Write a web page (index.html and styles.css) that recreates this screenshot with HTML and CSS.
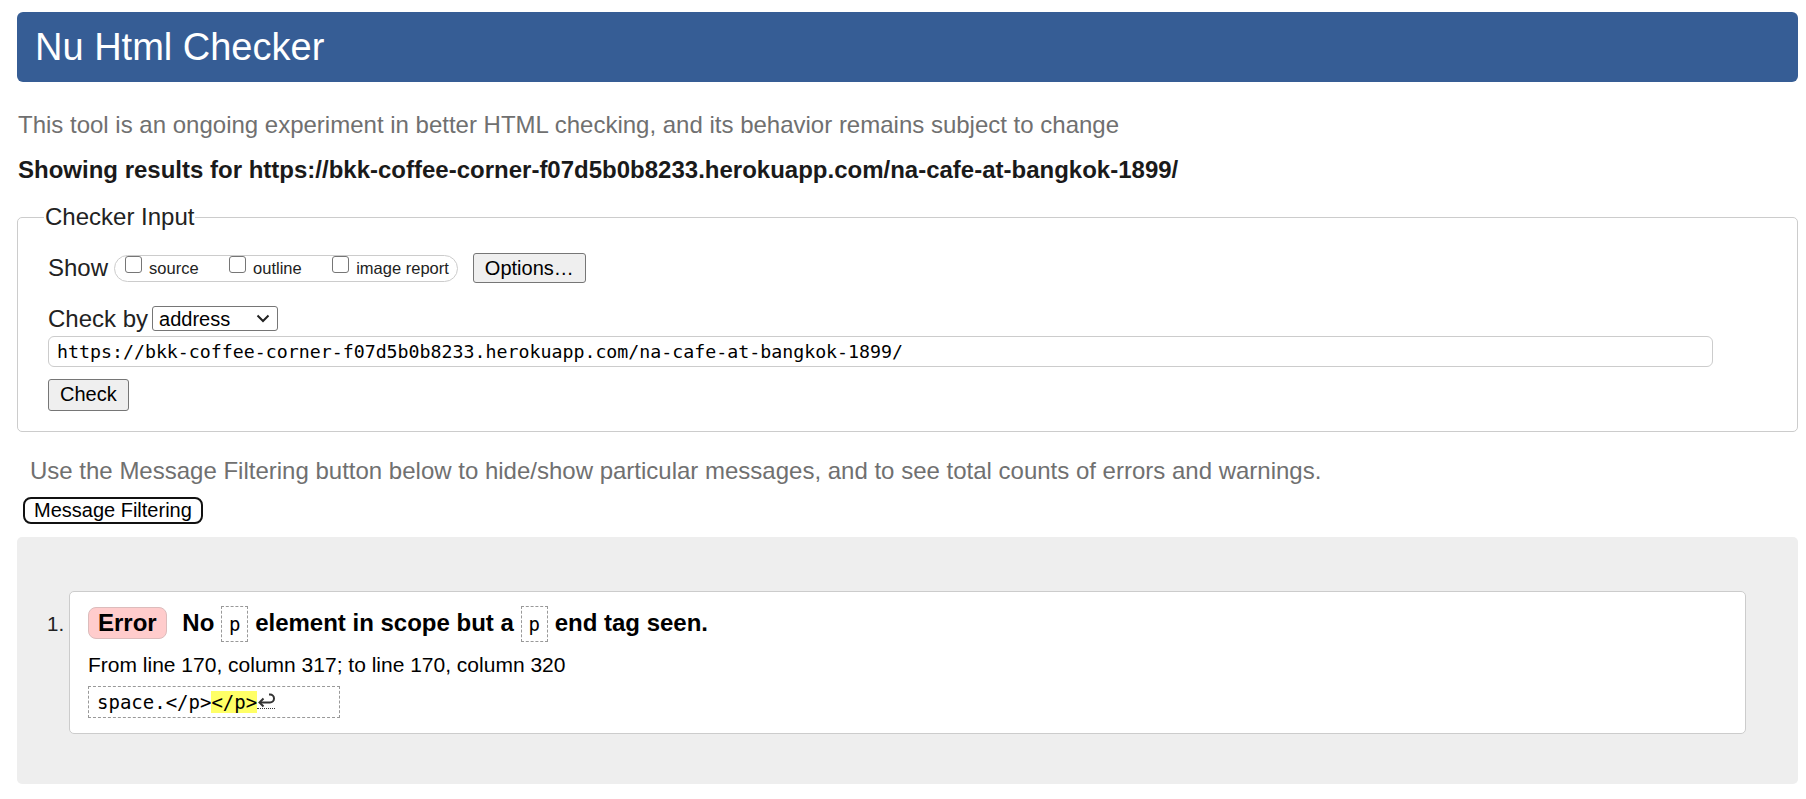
FILE: index.html
```html
<!DOCTYPE html>
<html lang="en">
<head>
<meta charset="utf-8">
<title>Nu Html Checker</title>
<link rel="stylesheet" href="styles.css">
</head>
<body>
<header class="banner"><h1>Nu Html Checker</h1></header>
<p class="intro">This tool is an ongoing experiment in better HTML checking, and its behavior remains subject to change</p>
<p class="showing">Showing results for https://bkk-coffee-corner-f07d5b0b8233.herokuapp.com/na-cafe-at-bangkok-1899/</p>
<fieldset class="checker">
  <legend>Checker Input</legend>
  <div class="row show-row">
    <span class="label">Show</span>
    <span class="opts">
      <span class="opt"><span class="cb"></span><span>source</span></span>
      <span class="opt"><span class="cb"></span><span>outline</span></span>
      <span class="opt"><span class="cb"></span><span>image report</span></span>
    </span>
    <button class="btn btn-options" type="button">Options…</button>
  </div>
  <div class="row by-row">
    <span class="label">Check by</span>
    <span class="select"><span>address</span><svg class="chev" width="14" height="9" viewBox="0 0 14 9"><path d="M1.5 1.5 L7 7 L12.5 1.5" fill="none" stroke="#222" stroke-width="2"/></svg></span>
  </div>
  <input class="url" type="text" readonly value="https://bkk-coffee-corner-f07d5b0b8233.herokuapp.com/na-cafe-at-bangkok-1899/">
  <button class="btn btn-check" type="button">Check</button>
</fieldset>
<p class="filter-note">Use the Message Filtering button below to hide/show particular messages, and to see total counts of errors and warnings.</p>
<button class="filter-btn" type="button">Message Filtering</button>
<section class="results">
  <ol class="messages">
    <li class="message">
      <span class="num">1.</span>
      <div class="card">
        <p class="msg"><span class="badge">Error</span> No <code class="tag">p</code> element in scope but a <code class="tag">p</code> end tag seen.</p>
        <p class="loc">From line 170, column 317; to line 170, column 320</p>
        <p class="extract"><code>space.&lt;/p&gt;<mark>&lt;/p&gt;</mark><span class="lf"><svg width="18" height="16" viewBox="0 0 18 16"><path d="M12 2.5 H13 A4 4 0 0 1 13 10.5 H3" fill="none" stroke="#333" stroke-width="2"/><path d="M6.5 6.5 L2.5 10.5 L6.5 14.5" fill="none" stroke="#333" stroke-width="2"/></svg></span></code></p>
      </div>
    </li>
  </ol>
</section>
</body>
</html>
```
FILE: styles.css
```css
html, body {
  background: #fff;
}
body {
  margin: 0;
  padding: 12px 8px 16px 17px;
  font-family: "Liberation Sans", Arial, sans-serif;
  font-size: 24px;
  line-height: 28px;
  color: #222;
}
.banner {
  height: 70px;
  background: #365d95;
  border-radius: 6px;
  display: flex;
  align-items: center;
  padding-left: 18px;
}
.banner h1 {
  margin: 0;
  font-size: 38px;
  font-weight: normal;
  line-height: 1;
  color: #fff;
}
.intro {
  margin: 29px 0 0 1px;
  color: #707070;
}
.showing {
  margin: 17px 0 0 1px;
  font-weight: bold;
  color: #1a1a1a;
}
.checker {
  margin: 19px 0 0;
  padding: 22px 30px 20px;
  border: 1px solid #ccc;
  border-radius: 5px;
  min-inline-size: auto;
}
.checker legend {
  padding: 0 1px;
  margin-left: -4px;
  color: #222;
}
.row {
  display: flex;
  align-items: center;
}
.show-row {
  height: 30px;
}
.label {
  white-space: nowrap;
}
.opts {
  display: inline-flex;
  align-items: center;
  gap: 30.5px;
  box-sizing: border-box;
  height: 27px;
  margin-left: 6px;
  padding: 0 8px 0 10px;
  border: 1px solid #ccc;
  border-radius: 14px;
  font-size: 16.5px;
  line-height: 20px;
}
.opt {
  display: inline-flex;
  align-items: center;
  gap: 7px;
}
.cb {
  display: inline-block;
  box-sizing: border-box;
  width: 17px;
  height: 17px;
  margin-bottom: 7px;
  border: 1px solid #767676;
  border-radius: 3px;
  background: #fff;
}
.btn {
  font-family: "Liberation Sans", Arial, sans-serif;
  font-size: 20px;
  color: #000;
  background: #efefef;
  border: 1px solid #767676;
  border-radius: 3px;
  padding: 0 11px;
  box-sizing: border-box;
}
.btn-options {
  height: 30px;
  margin-left: 15px;
}
.by-row {
  height: 28px;
  margin-top: 21.6px;
}
.select {
  display: inline-flex;
  align-items: center;
  justify-content: space-between;
  box-sizing: border-box;
  width: 126px;
  height: 25px;
  margin-left: 4px;
  padding: 0 7px 0 6px;
  border: 1px solid #767676;
  border-radius: 3px;
  font-size: 20px;
  color: #000;
}
.url {
  display: block;
  box-sizing: border-box;
  width: 1665px;
  height: 31px;
  margin: 3.4px 0 0;
  padding: 0 8px;
  border: 1px solid #ccc;
  border-radius: 6px;
  font-family: "DejaVu Sans Mono", monospace;
  font-size: 18.25px;
  color: #000;
  outline: none;
}
.btn-check {
  display: block;
  height: 32px;
  margin-top: 12px;
}
.filter-note {
  margin: 24.6px 0 0 13px;
  color: #707070;
}
.filter-btn {
  display: block;
  box-sizing: border-box;
  height: 27px;
  margin: 12.4px 0 0 6px;
  padding: 0 9px;
  border: 2px solid #111;
  border-radius: 8px;
  background: #fff;
  font-family: "Liberation Sans", Arial, sans-serif;
  font-size: 20px;
  color: #000;
}
.results {
  margin-top: 13px;
  background: #eee;
  border-radius: 5px;
  padding: 54px 52px 50px 30px;
}
.messages {
  margin: 0;
  padding: 0;
  list-style: none;
}
.message {
  display: flex;
  align-items: baseline;
}
.num {
  width: 22px;
  flex: none;
  font-size: 20.5px;
  color: #222;
}
.card {
  flex: 1;
  background: #fff;
  border: 1px solid #ccc;
  border-radius: 5px;
  padding: 13px 18px 15px;
  color: #000;
}
.msg {
  margin: 0;
  font-weight: bold;
  line-height: 36px;
}
.badge {
  display: inline-block;
  line-height: 30px;
  padding: 0 9px;
  margin-right: 9px;
  background: #fcc;
  border: 1px solid #dcbcbc;
  border-radius: 8px;
}
.tag {
  display: inline-block;
  font-family: "DejaVu Sans Mono", monospace;
  font-weight: normal;
  font-size: 19px;
  line-height: 34px;
  padding: 0 7px;
  border: 1px dashed #999;
}
.loc {
  margin: 9px 0 0;
  font-size: 21px;
  line-height: 28px;
}
.extract {
  box-sizing: border-box;
  width: 252px;
  margin: 7.5px 0 0;
  padding-left: 8px;
  border: 1px dashed #999;
  font-family: "DejaVu Sans Mono", monospace;
  font-size: 19px;
  line-height: 30px;
}
.extract code {
  font-family: inherit;
  font-size: inherit;
}
.extract mark {
  background: #ff6;
  color: inherit;
}
.lf {
  display: inline-block;
  line-height: 0;
  border-bottom: 1px dotted #333;
}
.lf svg {
  display: inline-block;
  vertical-align: 1px;
}
```
